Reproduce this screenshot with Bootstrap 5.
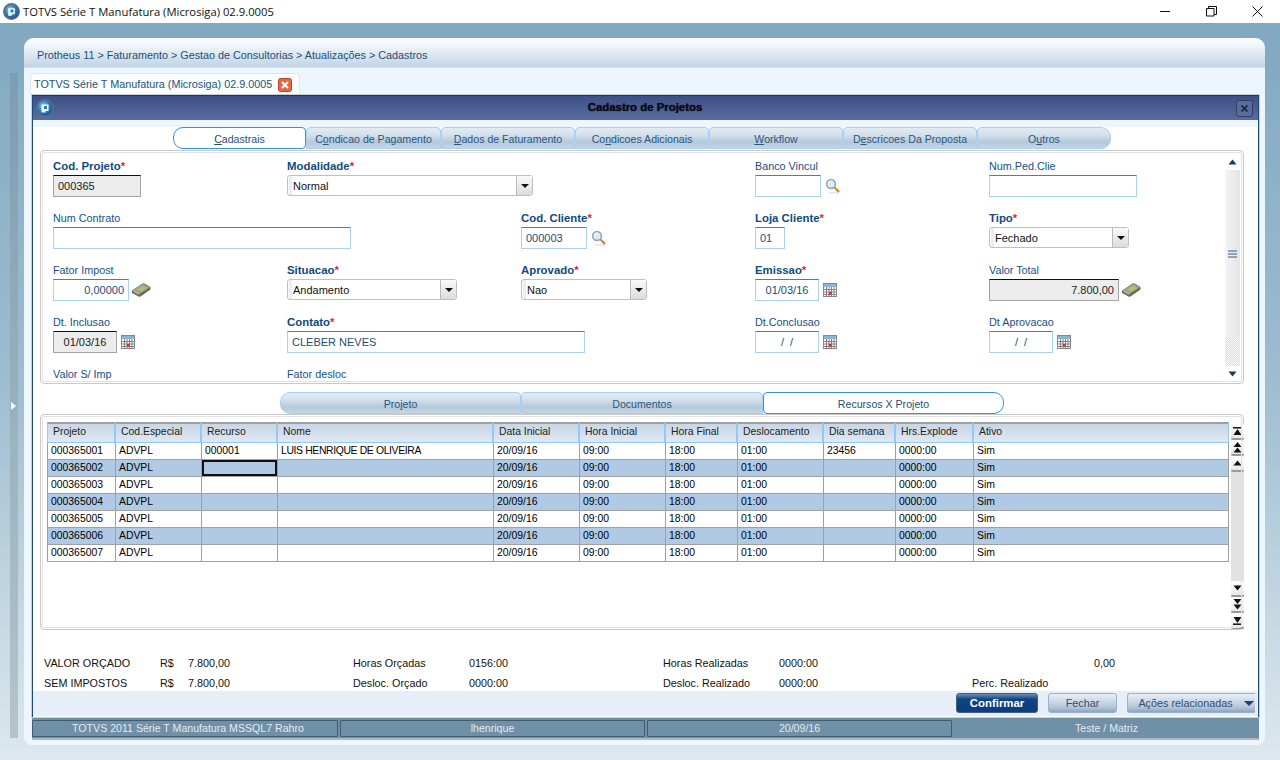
<!DOCTYPE html>
<html lang="pt"><head><meta charset="utf-8"><title>TOTVS</title>
<link href="https://cdn.jsdelivr.net/npm/bootstrap@5.3.0/dist/css/bootstrap.min.css" rel="stylesheet">
<script src="https://cdn.jsdelivr.net/npm/bootstrap@5.3.0/dist/js/bootstrap.bundle.min.js"></script>
<style>
html,body{height:760px;overflow:hidden}
body{margin:0;font:10.8px/1 "Liberation Sans",Arial,sans-serif;color:#000;background:linear-gradient(180deg,#7fa7c0 0,#9dbdd0 50%,#dde8ee 100%)}
.defs{width:0;height:0;overflow:hidden}
.os-bar{height:23px;background:#fff;padding-left:3px;font:11.25px "Open Sans",sans-serif;color:#111}
.os-bar .ttl{margin-left:3px}
.os-btn{width:46px;height:23px}
.desk{height:737px;padding-top:15px}
.rail{width:8px;margin:35px 6px 22px 10px;background:linear-gradient(180deg,#7d9db3,#b4c4ca);position:relative}
.rail i{position:absolute;left:1px;top:329px;border:4px solid transparent;border-left:5px solid #fff;border-right:0}
.shell{width:1241px;height:707px;background:#eef6fd;border-radius:10px 10px 8px 8px}
.crumb{height:30px;padding:12px 0 0 13px;font-size:10.8px;color:#1d4f7c;background:linear-gradient(180deg,#fbfdfe 0,#f1f6fa 25%,#c1d3e5 100%);border-radius:10px 10px 0 0;border-bottom:1px solid #d3e2f0}
.docktab{height:22px;width:270px;margin:5px 0 0 6px;padding-left:3px;background:#fbfdff;border:1px solid #dfe6ec;border-bottom:0;border-radius:4px 4px 0 0;color:#24527c;white-space:nowrap}
.docktab svg{margin-left:6px}
.win{width:1227px;margin-left:8px;height:622px;border-left:1px solid #1d4a78;border-right:1px solid #1d4a78;border-top:1px solid #333;border-bottom:2px solid #1d4a78;outline:1px solid #c9ced2}
.win-t{height:24px;background:linear-gradient(180deg,#3d5087,#5a6c9d);padding:0 5px 0 3px}
.win-t h1{flex:1;margin:0;text-align:center;font-size:11.4px;font-weight:700;color:#0b0b18;text-shadow:0 0 1px #0b0b18}
.win-x{width:17px;height:17px;border:1px solid #2f4068;border-radius:3px;background:#5a6c9d}
.win-b{background:#fff;height:595px}
.tabs{flex-wrap:nowrap;height:22px}
.t1{padding-left:140px;margin-top:7px}
.tabs .nav-link{height:22px;padding:3px 0 0;text-align:center;color:#2a5680;background:linear-gradient(180deg,#e3ebf3 0,#d3e0ec 35%,#b5c9da 70%,#c4d5e3 100%);border:1px solid #a5d0f8;border-radius:4px 4px 0 0;font-size:10.6px;line-height:17px}
.tabs .nav-link.active{background:#fff;border-color:#2a95ea;color:#1d4f7c;border-radius:10px 4px 4px 10px}
.tabs .nav-link.end{border-radius:4px 10px 10px 0}
.tabs .nav-link.start{border-radius:10px 4px 0 10px}
.tabs .nav-link.r{border-radius:4px 10px 10px 4px}
.panel{margin-left:7px;width:1204px;border:1px solid #c9c9c9;outline:1px solid #e2e2e2;outline-offset:-3px;border-radius:4px;background:#fff}
.p-form{height:234px;margin-top:1px;padding:8px 3px 0 12px;overflow:hidden}
.fgrid{display:grid;grid-template-columns:repeat(5,234px);grid-auto-rows:52px;width:1170px}
.f span.l{display:block;height:16px;line-height:15px;color:#165087}
.f span.l b{color:#0f4a82;font-size:11.4px}
.f em{color:#f01c2c;font-style:normal;font-weight:700;font-size:11.4px}
.fx{display:flex;align-items:center;gap:4px}
.fx svg.c{margin-left:-2px}
.inp{height:22px;padding:0 4px;font-size:11px;line-height:20px;color:#1c4d78;border:1px solid #a9d2f7;border-top-color:#5c7a94;background:#fff}
.inp.ro{background:#ececec;border:1px solid #a3a3a3;border-top-color:#111;color:#222}
.sel{height:21px;padding-left:1px;border:1px solid #bfbfbf;border-radius:3px;background:#fff;line-height:20px;color:#111;font-size:11px}
.sel s{text-decoration:none;flex:1;border-left:3px solid #ededed;padding-left:1px}
.sel i{width:16px;height:19px;border-left:1px solid #bbb;background:linear-gradient(180deg,#fafafa,#dcdcdc);display:flex;align-items:center;justify-content:center}
.sel i::after{content:"";border:4px solid transparent;border-top:4px solid #111;border-bottom:0}
.vs{width:15px;background:#ececec;flex:none;margin-top:-5px;height:228px}
.vs .b{height:16px;background:#fff;display:flex;align-items:center;justify-content:center}
.vs .th{height:167px;background:linear-gradient(90deg,#f4f4f4,#e4e4e4);display:flex;align-items:center;justify-content:center}
.vs .hat{height:29px;background:repeating-conic-gradient(#ddd 0 25%,#f8f8f8 0 50%) 0 0/2px 2px}
.vs .fill{flex:1}
.t2{padding-left:247px;margin-top:8px;position:relative;z-index:1}
.p-grid{height:216px;padding:7px 0 0 6px;gap:2px;align-items:flex-start}
.gt{width:1182px;table-layout:fixed;border-collapse:separate;border-spacing:0;margin:0;font-size:10.4px}
.gt th,.gt td{padding:0 0 0 3px;height:17px;line-height:15px;font-weight:400;white-space:nowrap;overflow:hidden;box-shadow:none;background:transparent;color:#000;border-width:0 0 1px 1px;border-style:solid;border-color:#a0a0a0;vertical-align:top}
.gt td:last-child{border-right:1px solid #a0a0a0}
.gt thead th{height:21px;padding-left:5px;color:#222;background:linear-gradient(180deg,#c9d6e4,#dfe8f4);border-top:2px solid #a0a0a0;border-bottom:1px solid #92c9fb;border-right:1px solid #92c9fb;border-left:1px solid #92c9fb}
.gt tr.alt td{background:#b0cae5}
.gt td.cur{box-shadow:inset 0 0 0 2px #111}
.gt td.cap{letter-spacing:-.36px}
.gs{width:13px;height:205px;margin-top:2px;background:#e1e1e1;flex:none}
.gs b{height:16px;width:13px;display:flex;align-items:center;justify-content:center;background:linear-gradient(180deg,#fff,#e8e8e8);border-bottom:2px solid #999;border-radius:2px}
.sum{display:grid;grid-template-columns:116px 28px 165px 116px 194px 116px 193px 122px auto;grid-auto-rows:20px;padding:23px 0 0 11px;height:61px;color:#111}
.sum div{line-height:20px;white-space:nowrap}
.foot{height:25px;background:#e6eef7;padding:2px 3px 0 0;gap:10px}
.foot .btn{height:20px;padding:0;font-size:10.8px;line-height:18px;border-radius:3px}
.foot .b-ok{width:82px;background:linear-gradient(180deg,#6d8fb5 0,#0f4383 30%,#0c3d7d 100%);border:1px solid #3f5f87;color:#fff;font-weight:700;font-size:11.4px}
.b-no{width:69px;background:linear-gradient(180deg,#e9eff7,#b3c4d8 75%,#8ea4bf);border:1px solid #95b3d3;color:#2d5072}
.b-act{width:128px;background:linear-gradient(180deg,#e9eff7,#b3c4d8 75%,#8ea4bf);border:1px solid #95b3d3;border-right:0;color:#2d5072;border-radius:3px 0 0 3px!important;position:relative;padding-right:12px!important}
.b-act i{position:absolute;right:1px;top:7px;border:5px solid transparent;border-top:5px solid #14427c;border-bottom:0}
.stat{width:1227px;margin-left:8px;height:23px;background:#6f90a6;border-bottom:2px solid #b3b7ba;padding-top:3px;color:#e3ebf0;font-size:10.6px}
.stat div{height:17px;line-height:15px;text-align:center;border:1px solid #3f5d72;border-radius:1px;margin-right:2px}
.stat .w{width:306px;padding-left:6px}.stat .w2{width:305px}
.stat .n{border:0;flex:1;margin:0;line-height:17px}
</style></head><body>
<svg width="0" height="0" class="defs position-absolute"><defs>
<radialGradient id="g" cx=".42" cy=".4" r=".65"><stop offset="0" stop-color="#a8d2f0"/><stop offset=".55" stop-color="#2f78b8"/><stop offset="1" stop-color="#174a82"/></radialGradient>
<symbol id="logo" viewBox="0 0 18 18"><circle cx="9" cy="9" r="8.300" fill="url(#g)" stroke="#5f7184" stroke-width="1.300"/><path d="M5.500 5.500h7v6.500h-3v1.500h-4z" fill="#eaf5fc"/><path d="M8 7h3v3H8z" fill="#2f78b8"/></symbol>
<symbol id="mag" viewBox="0 0 16 16"><path d="M4 14.800h10" stroke="#e2e2e2" stroke-width="1.200"/><circle cx="6" cy="6" r="4.400" fill="#dcedf5" stroke="#9ba8ae" stroke-width="1.600"/><path d="M3.600 5a3 3 0 0 1 3-2.300" stroke="#fff" fill="none"/><path d="M9.400 9.400l1.500 1.500" stroke="#8f8f8f" stroke-width="2"/><path d="M10.800 10.800l3.200 3.200" stroke="#d9852a" stroke-width="2.400"/></symbol>
<symbol id="cash" viewBox="0 0 20 16"><path d="M1 8.500L11.500 1.500q1-.7 2 0L19.500 5v2.500L9.500 14.500q-1 .6-2 .1L1 11z" fill="#6f6855"/><path d="M1.500 8.500L12 1.700l7 3.500L8.500 12z" fill="#a7a38b"/><path d="M6.500 7.500l5.500-3.500 3.700 1.900-5.500 3.500z" fill="#a9c473"/><path d="M2.500 9.300l5.800 3" stroke="#d4d0bc" fill="none"/></symbol>
<symbol id="cal" viewBox="0 0 14 14"><rect x=".5" y=".5" width="13" height="13" fill="#fff" stroke="#888"/><rect x="1" y="1" width="12" height="3" fill="#8fb3d3"/><path d="M1 6.500h12M1 9h12M1 11.500h12M3.500 4v9.500M6 4v9.500M8.500 4v9.500M11 4v9.500" stroke="#777" stroke-width=".9"/><rect x="6" y="9" width="2.500" height="2.500" fill="#e8202c"/></symbol>
<symbol id="up" viewBox="0 0 9 6"><path d="M4.500 .5L8.500 5.500H.5z" fill="#123a6b"/></symbol>
<symbol id="dn" viewBox="0 0 9 6"><path d="M4.500 5.500L8.500 .5H.5z" fill="#123a6b"/></symbol>
</defs></svg>

<header class="os-bar d-flex align-items-center">
<svg width="17" height="17"><use href="#logo"/></svg><span class="ttl flex-grow-1">TOTVS Série T Manufatura (Microsiga) 02.9.0005</span>
<div class="d-flex">
<div class="os-btn d-flex align-items-center justify-content-center"><svg width="11" height="11"><path d="M0 5.500h10" stroke="#111"/></svg></div>
<div class="os-btn d-flex align-items-center justify-content-center"><svg width="11" height="11"><path d="M.5 2.500h7.500v7.500H.5zM2.500 2.500V.5h8v8H8" fill="none" stroke="#111"/></svg></div>
<div class="os-btn d-flex align-items-center justify-content-center"><svg width="11" height="11"><path d="M.5.5l10 10M10.500.5l-10 10" stroke="#111"/></svg></div>
</div></header>

<main class="desk d-flex">
<aside class="rail"><i></i></aside>
<section class="shell">
<div class="crumb">Protheus 11 &gt; Faturamento &gt; Gestao de Consultorias &gt; Atualizações &gt; Cadastros</div>
<div class="docktab d-flex align-items-center">TOTVS Série T Manufatura (Microsiga) 02.9.0005<svg width="14" height="14"><rect x=".5" y=".5" width="13" height="13" rx="2" fill="#e2683f" stroke="#b9462a"/><path d="M4 4l6 6M10 4l-6 6" stroke="#fff" stroke-width="2"/></svg></div>
<div class="win">
<div class="win-t d-flex align-items-center"><svg width="18" height="18"><use href="#logo"/></svg><h1>Cadastro de Projetos</h1><div class="win-x d-flex align-items-center justify-content-center"><svg width="7" height="7"><path d="M.5.5l6 6M6.500.5l-6 6" stroke="#1f2a44" stroke-width="1.800"/></svg></div></div>
<div class="win-b">
<nav class="nav tabs t1">
<a class="nav-link active" style="width:133px"><u>C</u>adastrais</a>
<a class="nav-link" style="width:135px">C<u>o</u>ndicao de Pagamento</a>
<a class="nav-link" style="width:134px"><u>D</u>ados de Faturamento</a>
<a class="nav-link" style="width:134px">Co<u>n</u>dicoes Adicionais</a>
<a class="nav-link" style="width:134px"><u>W</u>orkflow</a>
<a class="nav-link" style="width:134px">D<u>e</u>scricoes Da Proposta</a>
<a class="nav-link end" style="width:134px">O<u>u</u>tros</a>
</nav>
<div class="panel p-form d-flex justify-content-between">
<div class="fgrid">
<div class="f"><span class="l"><b>Cod. Projeto</b><em>*</em></span><div class="inp ro" style="width:88px">000365</div></div>
<div class="f"><span class="l"><b>Modalidade</b><em>*</em></span><div class="sel d-flex" style="width:246px"><s>Normal</s><i></i></div></div>
<div class="f"></div>
<div class="f"><span class="l">Banco Vincul</span><div class="fx"><div class="inp" style="width:66px"></div><svg width="16" height="16"><use href="#mag"/></svg></div></div>
<div class="f"><span class="l">Num.Ped.Clie</span><div class="inp" style="width:148px"></div></div>

<div class="f" style="grid-column:span 2"><span class="l">Num Contrato</span><div class="inp" style="width:298px"></div></div>
<div class="f"><span class="l"><b>Cod. Cliente</b><em>*</em></span><div class="fx"><div class="inp" style="width:66px">000003</div><svg width="16" height="16"><use href="#mag"/></svg></div></div>
<div class="f"><span class="l"><b>Loja Cliente</b><em>*</em></span><div class="inp" style="width:30px">01</div></div>
<div class="f"><span class="l"><b>Tipo</b><em>*</em></span><div class="sel d-flex" style="width:140px"><s>Fechado</s><i></i></div></div>

<div class="f"><span class="l">Fator Impost</span><div class="fx"><div class="inp text-end" style="width:76px">0,00000</div><svg class="c" width="20" height="16"><use href="#cash"/></svg></div></div>
<div class="f"><span class="l"><b>Situacao</b><em>*</em></span><div class="sel d-flex" style="width:170px"><s>Andamento</s><i></i></div></div>
<div class="f"><span class="l"><b>Aprovado</b><em>*</em></span><div class="sel d-flex" style="width:126px"><s>Nao</s><i></i></div></div>
<div class="f"><span class="l"><b>Emissao</b><em>*</em></span><div class="fx"><div class="inp text-center" style="width:64px">01/03/16</div><svg width="14" height="14"><use href="#cal"/></svg></div></div>
<div class="f"><span class="l">Valor Total</span><div class="fx"><div class="inp ro text-end" style="width:130px">7.800,00</div><svg class="c" width="20" height="16"><use href="#cash"/></svg></div></div>

<div class="f"><span class="l">Dt. Inclusao</span><div class="fx"><div class="inp ro text-center" style="width:64px">01/03/16</div><svg width="14" height="14"><use href="#cal"/></svg></div></div>
<div class="f" style="grid-column:span 2"><span class="l"><b>Contato</b><em>*</em></span><div class="inp" style="width:298px">CLEBER NEVES</div></div>
<div class="f"><span class="l">Dt.Conclusao</span><div class="fx"><div class="inp text-center" style="width:64px">/ &nbsp;/</div><svg width="14" height="14"><use href="#cal"/></svg></div></div>
<div class="f"><span class="l">Dt Aprovacao</span><div class="fx"><div class="inp text-center" style="width:64px">/ &nbsp;/</div><svg width="14" height="14"><use href="#cal"/></svg></div></div>

<div class="f"><span class="l">Valor S/ Imp</span></div>
<div class="f"><span class="l">Fator desloc</span></div>
</div>
<div class="vs d-flex flex-column">
<div class="b"><svg width="9" height="6"><use href="#up"/></svg></div>
<div class="th"><svg width="9" height="8"><path d="M0 1h9M0 4h9M0 7h9" stroke="#2b5a8c" stroke-width="1.200"/></svg></div>
<div class="hat"></div><div class="fill"></div>
<div class="b"><svg width="9" height="6"><use href="#dn"/></svg></div>
</div>
</div>

<nav class="nav tabs t2">
<a class="nav-link start" style="width:241px">Projeto</a>
<a class="nav-link" style="width:242px">Documentos</a>
<a class="nav-link active r" style="width:241px">Recursos X Projeto</a>
</nav>
<div class="panel p-grid d-flex">
<table class="table gt">
<colgroup><col style="width:68px"><col style="width:86px"><col style="width:76px"><col style="width:216px"><col style="width:86px"><col style="width:86px"><col style="width:72px"><col style="width:86px"><col style="width:72px"><col style="width:78px"><col style="width:256px"></colgroup>
<thead><tr><th>Projeto</th><th>Cod.Especial</th><th>Recurso</th><th>Nome</th><th>Data Inicial</th><th>Hora Inicial</th><th>Hora Final</th><th>Deslocamento</th><th>Dia semana</th><th>Hrs.Explode</th><th>Ativo</th></tr></thead>
<tbody>
<tr><td>000365001</td><td>ADVPL</td><td>000001</td><td class="cap">LUIS HENRIQUE DE OLIVEIRA</td><td>20/09/16</td><td>09:00</td><td>18:00</td><td>01:00</td><td>23456</td><td>0000:00</td><td>Sim</td></tr>
<tr class="alt"><td>000365002</td><td>ADVPL</td><td class="cur"></td><td></td><td>20/09/16</td><td>09:00</td><td>18:00</td><td>01:00</td><td></td><td>0000:00</td><td>Sim</td></tr>
<tr><td>000365003</td><td>ADVPL</td><td></td><td></td><td>20/09/16</td><td>09:00</td><td>18:00</td><td>01:00</td><td></td><td>0000:00</td><td>Sim</td></tr>
<tr class="alt"><td>000365004</td><td>ADVPL</td><td></td><td></td><td>20/09/16</td><td>09:00</td><td>18:00</td><td>01:00</td><td></td><td>0000:00</td><td>Sim</td></tr>
<tr><td>000365005</td><td>ADVPL</td><td></td><td></td><td>20/09/16</td><td>09:00</td><td>18:00</td><td>01:00</td><td></td><td>0000:00</td><td>Sim</td></tr>
<tr class="alt"><td>000365006</td><td>ADVPL</td><td></td><td></td><td>20/09/16</td><td>09:00</td><td>18:00</td><td>01:00</td><td></td><td>0000:00</td><td>Sim</td></tr>
<tr><td>000365007</td><td>ADVPL</td><td></td><td></td><td>20/09/16</td><td>09:00</td><td>18:00</td><td>01:00</td><td></td><td>0000:00</td><td>Sim</td></tr>
</tbody></table>
<div class="gs d-flex flex-column">
<b><svg width="9" height="9"><path d="M0 .8h9" stroke="#111" stroke-width="1.500"/><path d="M4.500 2L8.500 8H.5z" fill="#111"/></svg></b>
<b><svg width="9" height="11"><path d="M4.500 0L8.500 5H.5zM4.500 5.500L8.500 10.500H.5z" fill="#111"/></svg></b>
<b><svg width="9" height="6"><path d="M4.500 .5L8.500 5.500H.5z" fill="#111"/></svg></b>
<div class="flex-grow-1"></div>
<b><svg width="9" height="6"><path d="M4.500 5.500L8.500 .5H.5z" fill="#111"/></svg></b>
<b><svg width="9" height="11"><path d="M4.500 5L8.500 0H.5zM4.500 10.500L8.500 5.500H.5z" fill="#111"/></svg></b>
<b><svg width="9" height="9"><path d="M0 8.200h9" stroke="#111" stroke-width="1.500"/><path d="M4.500 7L8.500 1H.5z" fill="#111"/></svg></b>
</div>
</div>
<div class="sum">
<div>VALOR ORÇADO</div><div>R$</div><div>7.800,00</div><div>Horas Orçadas</div><div>0156:00</div><div>Horas Realizadas</div><div>0000:00</div><div></div><div>0,00</div>
<div>SEM IMPOSTOS</div><div>R$</div><div>7.800,00</div><div>Desloc. Orçado</div><div>0000:00</div><div>Desloc. Realizado</div><div>0000:00</div><div>Perc. Realizado</div><div></div>
</div>
<div class="foot d-flex justify-content-end">
<button class="btn b-ok">Confirmar</button><button class="btn b-no">Fechar</button><button class="btn b-act">Ações relacionadas<i></i></button>
</div>
</div>
</div>
<footer class="stat d-flex"><div class="w">TOTVS 2011 Série T Manufatura MSSQL7 Rahro</div><div class="w2">lhenrique</div><div class="w2">20/09/16</div><div class="n">Teste / Matriz</div></footer>
</section>
</main>
</body></html>
